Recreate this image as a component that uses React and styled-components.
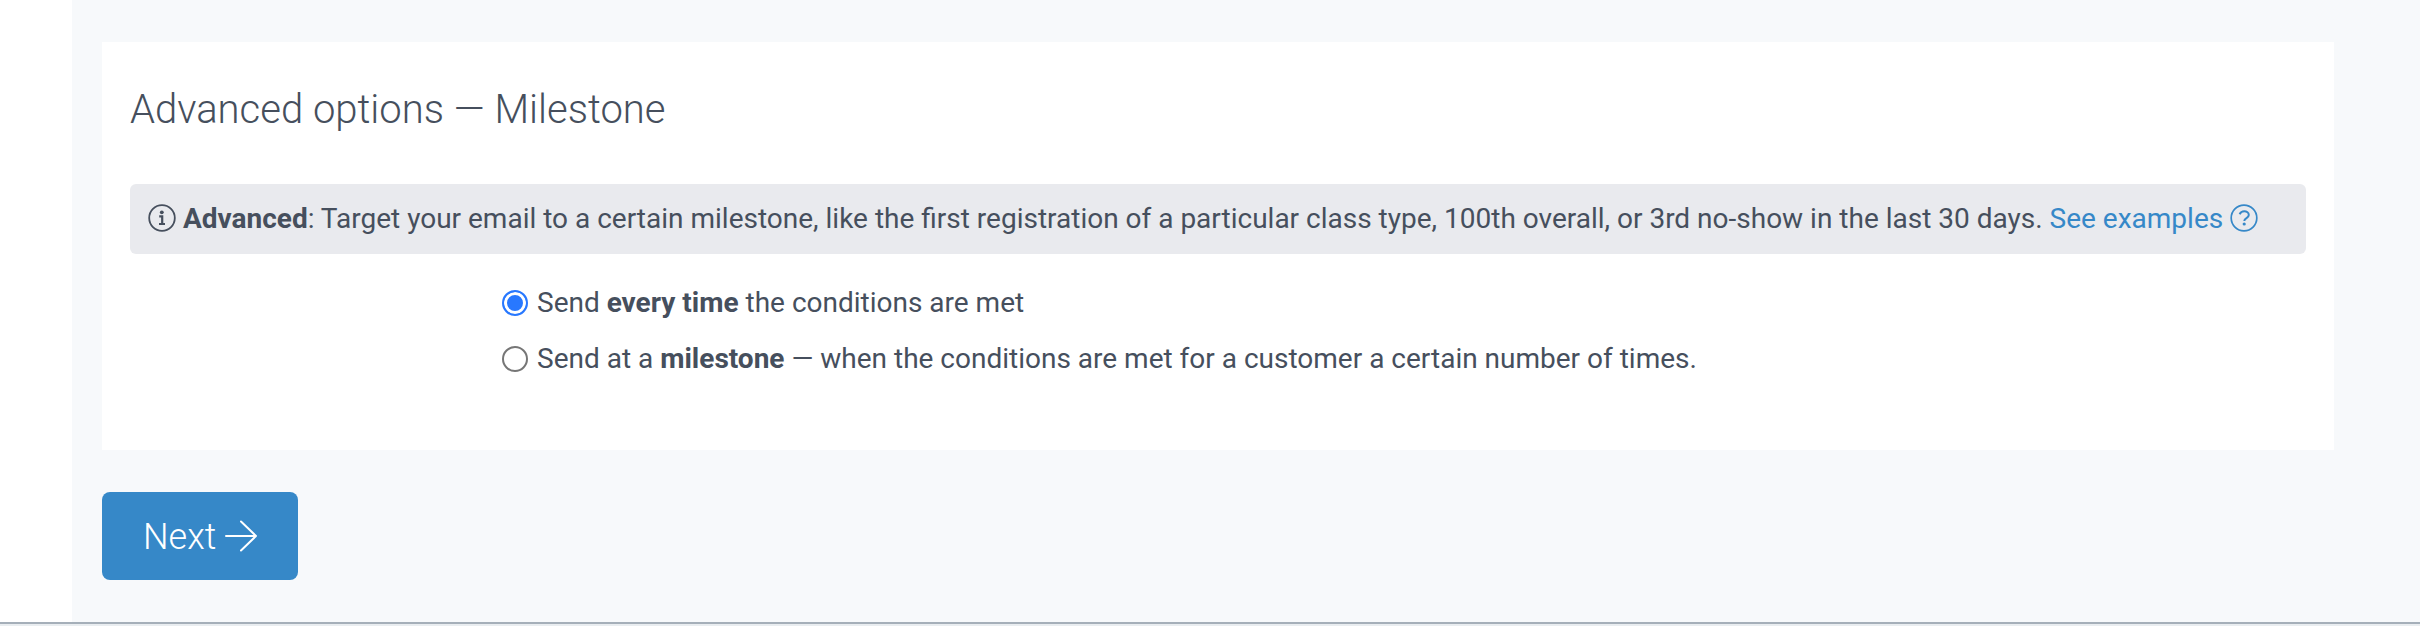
import React, { useState } from "react";
import styled, { createGlobalStyle } from "styled-components";

const GlobalStyle = createGlobalStyle`
  * {
    box-sizing: border-box;
  }

  body {
    margin: 0;
    background-color: #ffffff;
    color: #464f5d;
    font-family: Roboto, "Liberation Sans", sans-serif;
    font-size: 28px;
    line-height: 40px;
  }
`;

const Page = styled.div`
  display: flex;
  flex-direction: column;
  min-height: 100vh;
`;

const Content = styled.main`
  flex: 1;
  margin-left: 72px;
  padding: 42px 86px 42px 30px;
  background-color: #f7f9fb;
`;

const Panel = styled.section`
  padding: 40px 28px 71px;
  background-color: #ffffff;
`;

const Title = styled.h1`
  margin: 0 0 46px;
  font-size: 40px;
  font-weight: 300;
  line-height: 56px;
`;

const Notice = styled.p`
  margin: 0;
  padding: 15px 18px;
  border-radius: 6px;
  background-color: #e9eaee;
`;

const HelpLink = styled.a`
  color: #3688c8;
  text-decoration: none;
`;

const Icon = styled.svg`
  width: ${({ $size }) => $size}px;
  height: ${({ $size }) => $size}px;
  vertical-align: ${({ $drop }) => $drop}px;
  fill: none;
  stroke: currentColor;
`;

const Options = styled.fieldset`
  display: flex;
  flex-direction: column;
  gap: 16px;
  margin: 29px 0 0;
  padding: 0;
  border: none;
  /* two of twelve columns stay empty on the left */
  margin-left: calc((100% + 56px) / 6);
`;

const Option = styled.label`
  display: flex;
  align-items: center;
  gap: 9px;
`;

const Radio = styled.input`
  appearance: none;
  flex: none;
  width: 26px;
  height: 26px;
  margin: 0;
  border: 2px solid #767676;
  border-radius: 50%;
  background-color: #ffffff;

  &:checked {
    border-color: #2878ff;
    background-color: #2878ff;
    box-shadow: inset 0 0 0 3px #ffffff;
  }
`;

const Button = styled.button`
  margin-top: 42px;
  padding: 21px 41px 19px;
  border: none;
  border-radius: 8px;
  background-color: #3688c8;
  color: #ffffff;
  font-family: inherit;
  font-size: 36px;
  font-weight: 300;
  line-height: 48px;
`;

const Footer = styled.footer`
  height: 4px;
  border-top: 2px solid #a5afb9;
  background-color: #e9edf0;
`;

const InfoIcon = () => (
  <Icon $size={28} $drop={-4} viewBox="0 0 28 28" strokeWidth="1.8" aria-hidden="true">
    <circle cx="14" cy="14" r="12.8" />
    <circle cx="13.8" cy="8.3" r="1.9" fill="currentColor" stroke="none" />
    <path d="M11.2 12.4h3v7.4M11 20h6" strokeWidth="2.2" />
  </Icon>
);

const QuestionIcon = () => (
  <Icon $size={28} $drop={-4} viewBox="0 0 28 28" strokeWidth="1.7" aria-hidden="true">
    <circle cx="14" cy="14" r="12.8" />
    <path
      d="M9.6 10.2C10.5 8.3 12.2 7.2 14.2 7.2c2.5 0 4.6 1.5 4.6 3.8 0 3.2-4.5 3-4.5 6"
      strokeWidth="2"
    />
    <circle cx="14.2" cy="20" r="1.6" fill="currentColor" stroke="none" />
  </Icon>
);

const ArrowIcon = () => (
  <Icon
    $size={32}
    $drop={-3}
    viewBox="0 0 32 32"
    strokeWidth="2"
    strokeLinecap="round"
    strokeLinejoin="round"
    aria-hidden="true"
  >
    <path d="M1 16h30M16 1.5L31 16 16 30.5" />
  </Icon>
);

const App = () => {
  const [frequency, setFrequency] = useState("always");

  const handleChange = (event) => {
    setFrequency(event.target.value);
  };

  return (
    <Page>
      <GlobalStyle />
      <Content>
        <Panel>
          <Title>Advanced options — Milestone</Title>
          <Notice>
            <InfoIcon /> <strong>Advanced</strong>: Target your email to a
            certain milestone, like the first registration of a particular class
            type, 100th overall, or 3rd no-show in the last 30 days.{" "}
            <HelpLink href="#examples">
              See examples <QuestionIcon />
            </HelpLink>
          </Notice>
          <Options>
            <Option>
              <Radio
                type="radio"
                name="frequency"
                value="always"
                checked={frequency === "always"}
                onChange={handleChange}
              />
              <span>
                Send <strong>every time</strong> the conditions are met
              </span>
            </Option>
            <Option>
              <Radio
                type="radio"
                name="frequency"
                value="milestone"
                checked={frequency === "milestone"}
                onChange={handleChange}
              />
              <span>
                Send at a <strong>milestone</strong> — when the conditions are
                met for a customer a certain number of times.
              </span>
            </Option>
          </Options>
        </Panel>
        <Button type="button">
          Next <ArrowIcon />
        </Button>
      </Content>
      <Footer />
    </Page>
  );
};

export default App;
